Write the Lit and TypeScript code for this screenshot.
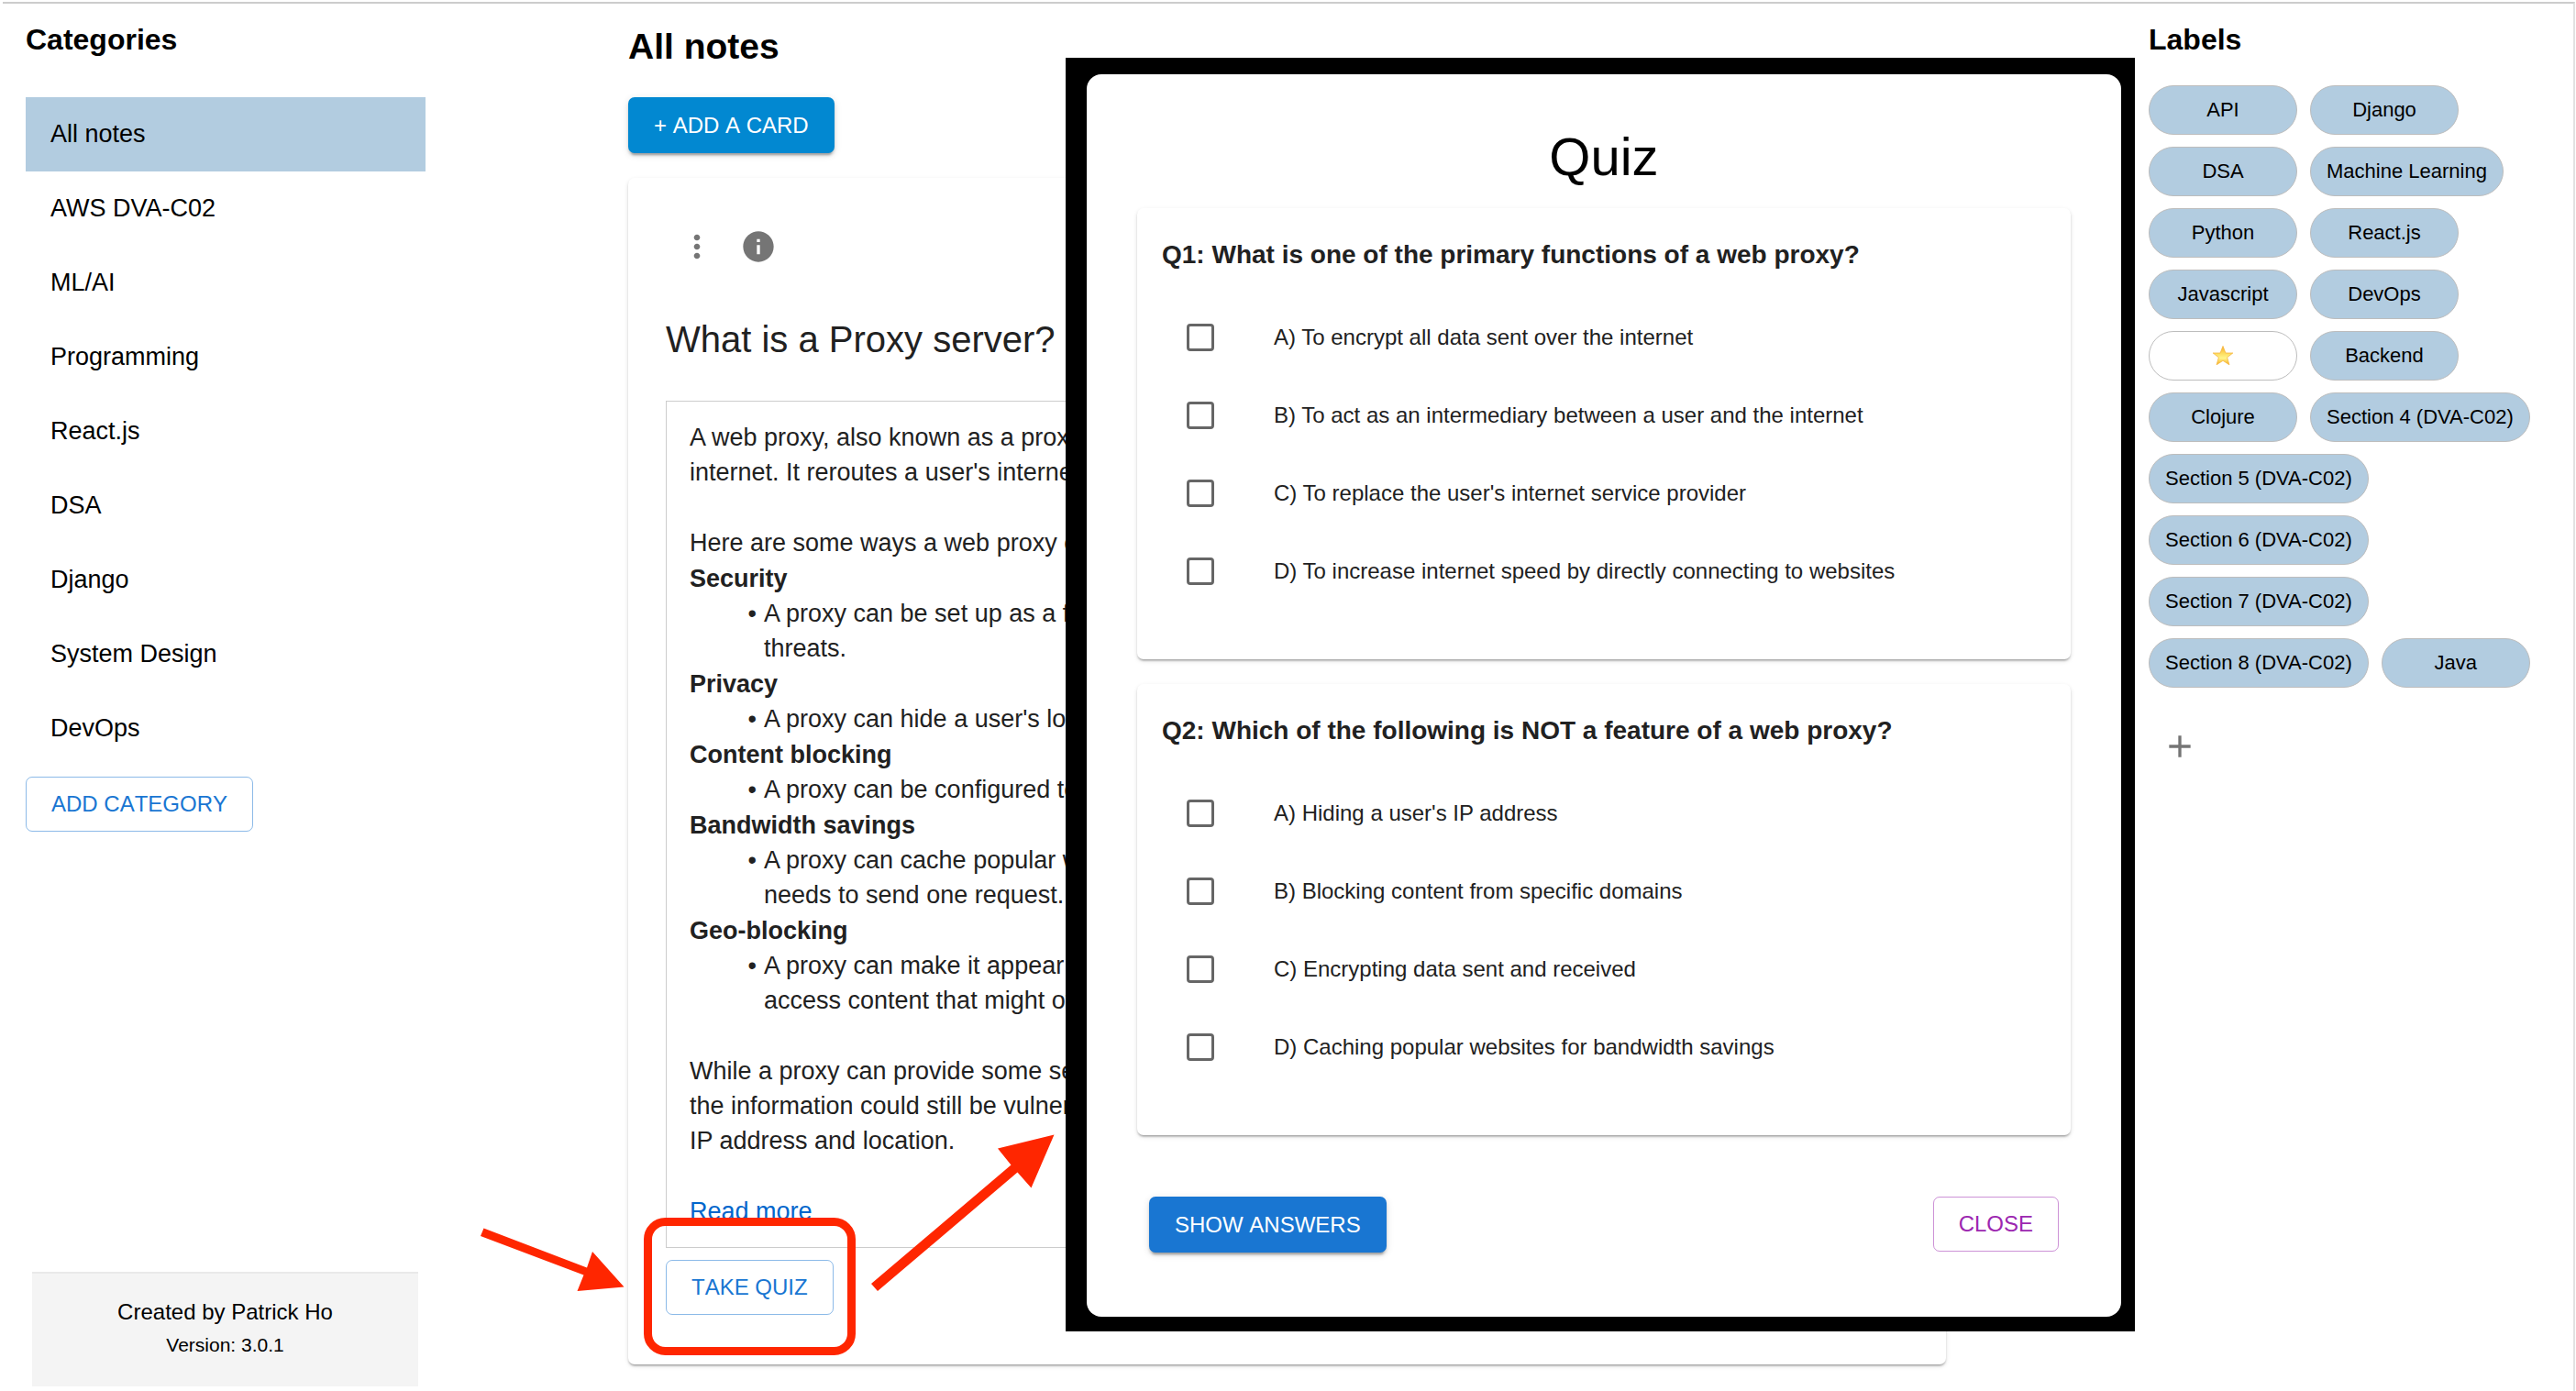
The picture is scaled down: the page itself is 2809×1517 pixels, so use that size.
import { LitElement, html, css } from "lit";
import { customElement, property, state } from "lit/decorators.js";
import { classMap } from "lit/directives/class-map.js";

const CATEGORIES = [
  "All notes",
  "AWS DVA-C02",
  "ML/AI",
  "Programming",
  "React.js",
  "DSA",
  "Django",
  "System Design",
  "DevOps",
];

const LABELS = [
  "API",
  "Django",
  "DSA",
  "Machine Learning",
  "Python",
  "React.js",
  "Javascript",
  "DevOps",
  "star",
  "Backend",
  "Clojure",
  "Section 4 (DVA-C02)",
  "Section 5 (DVA-C02)",
  "Section 6 (DVA-C02)",
  "Section 7 (DVA-C02)",
  "Section 8 (DVA-C02)",
  "Java",
];

interface Topic {
  name: string;
  lines: string[];
}

const TOPICS: Topic[] = [
  { name: "Security", lines: ["A proxy can be set up as a firewall", "threats."] },
  { name: "Privacy", lines: ["A proxy can hide a user's location."] },
  { name: "Content blocking", lines: ["A proxy can be configured to"] },
  { name: "Bandwidth savings", lines: ["A proxy can cache popular web", "needs to send one request."] },
  { name: "Geo-blocking", lines: ["A proxy can make it appear", "access content that might often"] },
];

interface Question {
  title: string;
  options: string[];
}

const QUESTIONS: Question[] = [
  {
    title: "Q1: What is one of the primary functions of a web proxy?",
    options: [
      "A) To encrypt all data sent over the internet",
      "B) To act as an intermediary between a user and the internet",
      "C) To replace the user's internet service provider",
      "D) To increase internet speed by directly connecting to websites",
    ],
  },
  {
    title: "Q2: Which of the following is NOT a feature of a web proxy?",
    options: [
      "A) Hiding a user's IP address",
      "B) Blocking content from specific domains",
      "C) Encrypting data sent and received",
      "D) Caching popular websites for bandwidth savings",
    ],
  },
];

const shared = css`
  *,
  *::before,
  *::after {
    box-sizing: border-box;
  }
  h1,
  h2,
  h3,
  p,
  ul {
    margin: 0;
    padding: 0;
  }
  ul {
    list-style: none;
  }
  button {
    font: inherit;
    cursor: pointer;
  }
  .btn {
    height: 60px;
    padding: 0 27px;
    border: 1px solid currentColor;
    border-radius: 7px;
    background: transparent;
    font-size: 24px;
    line-height: 40px;
    font-kerning: none;
    text-transform: uppercase;
    white-space: nowrap;
  }
  .outlined {
    color: #1976d2;
    border-color: rgba(25, 118, 210, 0.5);
  }
  .secondary {
    color: #9c27b0;
    border-color: rgba(156, 39, 176, 0.5);
  }
  .contained {
    height: 61px;
    color: #fff;
    border-color: transparent;
    background: #1976d2 border-box;
    box-shadow: 0 5px 2px -3px rgba(0, 0, 0, 0.2), 0 3px 3px rgba(0, 0, 0, 0.14),
      0 2px 8px rgba(0, 0, 0, 0.12);
  }
  .info {
    background-color: #0288d1;
  }
  .paper {
    background: #fff;
    border-radius: 7px;
    box-shadow: 0 3px 2px -2px rgba(0, 0, 0, 0.2), 0 2px 2px rgba(0, 0, 0, 0.14),
      0 2px 5px rgba(0, 0, 0, 0.12);
  }
`;

@customElement("category-nav")
export class CategoryNav extends LitElement {
  @state() private selected = CATEGORIES[0];

  static styles = [
    shared,
    css`
      :host {
        display: flex;
        flex-direction: column;
        align-items: flex-start;
        padding: 21px 0 5px;
      }
      .heading {
        font-size: 32px;
        line-height: 36px;
        margin-bottom: 45px;
      }
      .list {
        width: 100%;
        margin-bottom: 12px;
      }
      .row {
        display: block;
        width: 100%;
        height: 81px;
        padding: 0 27px;
        border: 0;
        background: transparent;
        color: #000;
        font-size: 27px;
        text-align: left;
      }
      .selected {
        background: #b2cce0;
      }
      .footer {
        align-self: stretch;
        margin: auto 8px 0 7px;
        padding: 24px 0 27px;
        border-top: 2px solid #e9e9e9;
        background: #f4f4f4;
        text-align: center;
        font-size: 24px;
        line-height: 36px;
      }
      .version {
        font-size: 21px;
      }
    `,
  ];

  render() {
    return html`
      <h2 class="heading">Categories</h2>
      <ul class="list">
        ${CATEGORIES.map(
          (name) => html`<li>
            <button
              type="button"
              class=${classMap({ row: true, selected: name === this.selected })}
              @click=${() => (this.selected = name)}
            >${name}</button>
          </li>`
        )}
      </ul>
      <button type="button" class="btn outlined">Add category</button>
      <footer class="footer">
        <p>Created by Patrick Ho</p>
        <p class="version">Version: 3.0.1</p>
      </footer>
    `;
  }
}

@customElement("note-board")
export class NoteBoard extends LitElement {
  static styles = [
    shared,
    css`
      :host {
        display: flex;
        flex-direction: column;
        align-items: flex-start;
        padding-top: 25px;
        color: #212121;
      }
      .heading {
        color: #000;
        font-size: 39px;
        line-height: 44px;
        margin-bottom: 33px;
      }
      .card {
        width: 100%;
        margin-top: 27px;
        padding: 41px 41px 54px;
      }
      .tools {
        display: flex;
      }
      .icon-btn {
        display: grid;
        place-items: center;
        width: 67px;
        height: 67px;
        padding: 0;
        border: 0;
        background: transparent;
        color: #757575;
      }
      .icon {
        width: 40px;
        height: 40px;
        fill: currentColor;
      }
      .title {
        margin: 41px 0 40px;
        font-size: 40px;
        font-weight: 400;
        line-height: 54px;
      }
      .note {
        margin-bottom: 13px;
        padding: 20px 25px;
        border: 1px solid #ccc;
        font-size: 27px;
        line-height: 38px;
        white-space: nowrap;
        overflow: hidden;
      }
      .line {
        display: block;
      }
      .gap {
        margin-top: 39px;
      }
      .topic {
        margin-top: 1px;
      }
      .topic-name {
        font-size: 27px;
        line-height: 38px;
      }
      .bullets {
        padding-left: 81px;
      }
      .bullet {
        position: relative;
      }
      .bullet::before {
        content: "•";
        position: absolute;
        right: 100%;
        margin-right: 8px;
      }
      .more {
        color: #06c;
        text-decoration: underline;
      }
    `,
  ];

  render() {
    return html`
      <h1 class="heading">All notes</h1>
      <button type="button" class="btn contained info">+ Add a card</button>
      <article class="card paper">
        <div class="tools">
          <button type="button" class="icon-btn" aria-label="More">
            <svg class="icon" viewBox="0 0 24 24">
              <path
                d="M12 8c1.1 0 2-.9 2-2s-.9-2-2-2-2 .9-2 2 .9 2 2 2zm0 2c-1.1 0-2 .9-2 2s.9 2 2 2 2-.9 2-2-.9-2-2-2zm0 6c-1.1 0-2 .9-2 2s.9 2 2 2 2-.9 2-2-.9-2-2-2z"
              />
            </svg>
          </button>
          <button type="button" class="icon-btn" aria-label="Info">
            <svg class="icon" viewBox="0 0 24 24">
              <path
                d="M12 2C6.48 2 2 6.48 2 12s4.48 10 10 10 10-4.480 10-10S17.520 2 12 2zm1 15h-2v-6h2v6zm0-8h-2V7h2v2z"
              />
            </svg>
          </button>
        </div>
        <h2 class="title">What is a Proxy server?</h2>
        <div class="note">
          <p>
            <span class="line">A web proxy, also known as a proxy</span>
            <span class="line">internet. It reroutes a user's internet</span>
          </p>
          <p class="gap">Here are some ways a web proxy can</p>
          ${TOPICS.map(
            (topic) => html`<section class="topic">
              <h3 class="topic-name">${topic.name}</h3>
              <ul class="bullets">
                <li class="bullet">${topic.lines.map((line) => html`<span class="line">${line}</span>`)}</li>
              </ul>
            </section>`
          )}
          <p class="gap">
            <span class="line">While a proxy can provide some security,</span>
            <span class="line">the information could still be vulnerable.</span>
            <span class="line">IP address and location.</span>
          </p>
          <p class="gap"><a class="more" href="#more">Read more</a></p>
        </div>
        <button type="button" class="btn outlined">Take quiz</button>
      </article>
    `;
  }
}

@customElement("label-panel")
export class LabelPanel extends LitElement {
  static styles = [
    shared,
    css`
      :host {
        display: block;
        padding-top: 21px;
      }
      .heading {
        font-size: 32px;
        line-height: 36px;
        margin-bottom: 32px;
      }
      .chips {
        display: flex;
        flex-wrap: wrap;
        gap: 13px 14px;
      }
      .chip {
        display: flex;
        align-items: center;
        justify-content: center;
        min-width: 162px;
        height: 54px;
        padding: 0 17px;
        border: 1px solid #bdbdbd;
        border-radius: 27px;
        background: #b2cce0;
        color: #000;
        font-size: 22px;
        white-space: nowrap;
      }
      .plain {
        background: #fff;
      }
      .star {
        width: 24px;
        height: 24px;
      }
      .add {
        display: grid;
        place-items: center;
        width: 67px;
        height: 67px;
        margin-top: 30px;
        padding: 0;
        border: 0;
        background: transparent;
        color: #757575;
      }
      .icon {
        width: 40px;
        height: 40px;
        fill: currentColor;
      }
    `,
  ];

  private star() {
    return html`<svg class="star" viewBox="0 0 24 24" role="img" aria-label="Star">
      <defs>
        <linearGradient id="gold" x1="0" y1="0" x2="0" y2="1">
          <stop offset="0" stop-color="#f7a928" />
          <stop offset="0.35" stop-color="#fdd95a" />
          <stop offset="0.65" stop-color="#fff58a" />
          <stop offset="1" stop-color="#f7a91c" />
        </linearGradient>
      </defs>
      <path
        d="M12 1.500L14.900 9H22.800L16.600 13.800 18.900 21.800 12 17.300 5.100 21.800 7.400 13.800 1.200 9H9.100Z"
        fill="url(#gold)"
        stroke="#f5b53c"
        stroke-width="0.800"
        stroke-linejoin="round"
      />
    </svg>`;
  }

  render() {
    return html`
      <h2 class="heading">Labels</h2>
      <div class="chips">
        ${LABELS.map(
          (label) => html`<button type="button" class=${classMap({ chip: true, plain: label === "star" })}>
            ${label === "star" ? this.star() : label}
          </button>`
        )}
      </div>
      <button type="button" class="add" aria-label="Add label">
        <svg class="icon" viewBox="0 0 24 24"><path d="M19 13h-6v6h-2v-6H5v-2h6V5h2v6h6v2z" /></svg>
      </button>
    `;
  }
}

@customElement("quiz-question")
export class QuizQuestion extends LitElement {
  @property({ attribute: false }) question: Question = QUESTIONS[0];

  static styles = [
    shared,
    css`
      :host {
        display: block;
        color: #212121;
      }
      .card {
        padding: 29px 27px 54px;
      }
      .title {
        margin-bottom: 25px;
        font-size: 28px;
        line-height: 44px;
      }
      .option {
        display: flex;
        align-items: center;
        gap: 65px;
        height: 85px;
        padding-left: 27px;
        font-size: 24px;
      }
      .box {
        appearance: none;
        flex: none;
        width: 30px;
        height: 30px;
        margin: 0;
        border: 3px solid #666;
        border-radius: 4px;
        background: #fff;
      }
      .box:checked {
        border-color: #1976d2;
        background: #1976d2;
      }
    `,
  ];

  render() {
    return html`
      <section class="card paper">
        <h3 class="title">${this.question.title}</h3>
        ${this.question.options.map(
          (option) => html`<label class="option"><input class="box" type="checkbox" />${option}</label>`
        )}
      </section>
    `;
  }
}

@customElement("quiz-dialog")
export class QuizDialog extends LitElement {
  static styles = [
    shared,
    css`
      :host {
        display: block;
        padding: 18px 15px 16px 23px;
        background: #000;
      }
      .panel {
        padding: 57px 55px 70px;
        border-radius: 16px;
        background: #fff;
      }
      .heading {
        margin-bottom: 23px;
        font-size: 58px;
        font-weight: 400;
        line-height: 66px;
        text-align: center;
      }
      .questions {
        display: grid;
        gap: 27px;
      }
      .actions {
        display: flex;
        justify-content: space-between;
        margin-top: 67px;
        padding: 0 13px;
      }
    `,
  ];

  render() {
    return html`
      <div class="panel" role="dialog" aria-labelledby="quiz-title">
        <h2 class="heading" id="quiz-title">Quiz</h2>
        <div class="questions">
          ${QUESTIONS.map((question) => html`<quiz-question .question=${question}></quiz-question>`)}
        </div>
        <div class="actions">
          <button type="button" class="btn contained">Show answers</button>
          <button type="button" class="btn secondary">Close</button>
        </div>
      </div>
    `;
  }
}

@customElement("app-root")
export class AppRoot extends LitElement {
  static styles = [
    shared,
    css`
      :host {
        display: block;
        position: relative;
        padding: 2px 1px 0 3px;
        background: #fff;
        color: #000;
        font-family: "Liberation Sans", Arial, Helvetica, sans-serif;
      }
      .frame {
        display: grid;
        grid-template-columns: 436px minmax(0, 1fr) 438px;
        column-gap: 221px;
        min-height: calc(100vh - 2px);
        padding: 0 25px;
        border-top: 2px solid #ccc;
        border-right: 2px solid #e2e2e2;
      }
      .overlay {
        position: absolute;
        top: 63px;
        left: 1162px;
        right: 481px;
      }
      .marks {
        position: absolute;
        top: 1230px;
        left: 520px;
        width: 640px;
        height: 260px;
        pointer-events: none;
      }
    `,
  ];

  render() {
    return html`
      <div class="frame">
        <category-nav></category-nav>
        <note-board></note-board>
        <label-panel></label-panel>
      </div>
      <quiz-dialog class="overlay"></quiz-dialog>
      <svg class="marks" viewBox="520 1230 640 260" aria-hidden="true">
        <rect x="706.500" y="1332.500" width="222" height="141" rx="19" fill="none" stroke="#ff2600" stroke-width="9" />
        <path fill="#ff2600" d="M527.500 1339.500 640 1382.500 646 1365 680.500 1403.500 629.500 1408 636.500 1390.500 524 1348Z" />
        <path fill="#ff2600" d="M950 1400 1102.500 1270.500 1088 1252.500 1149.500 1237.500 1124.500 1295.500 1109.500 1278.500 957 1408Z" />
      </svg>
    `;
  }
}
